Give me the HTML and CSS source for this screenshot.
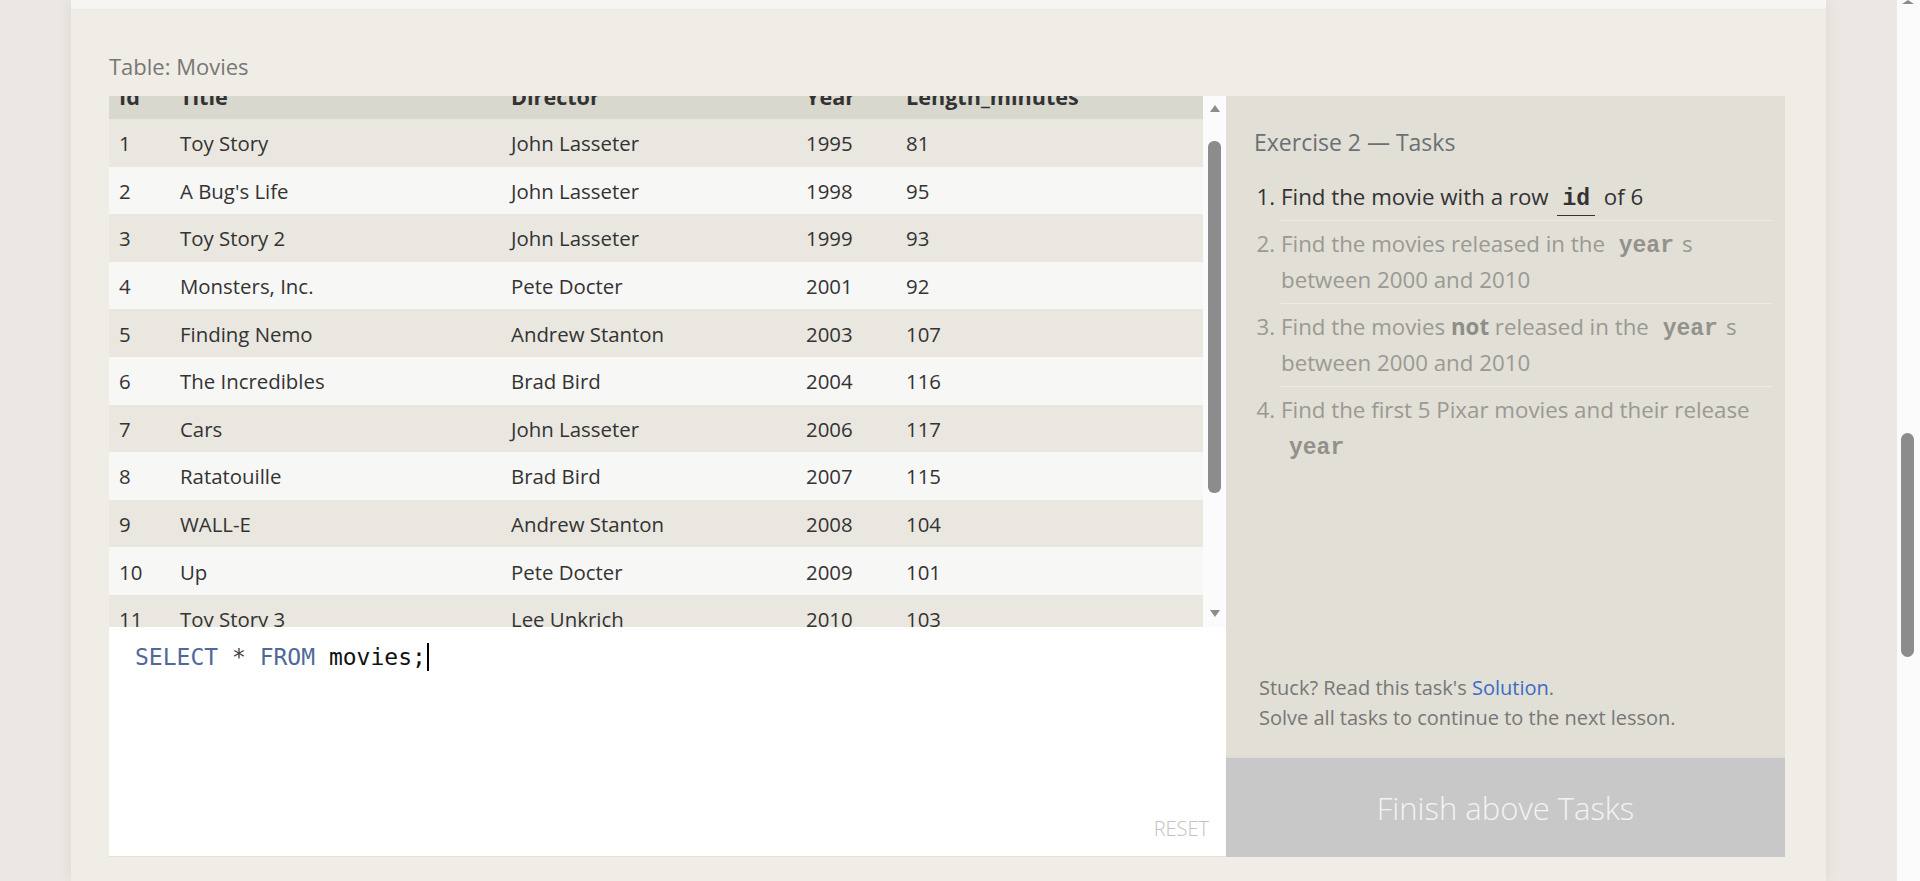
FILE: index.html
```html
<!DOCTYPE html>
<html lang="en">
<head>
<meta charset="utf-8">
<title>SQL Lesson — Table: Movies</title>
<link rel="stylesheet" href="styles.css">
</head>
<body>
<div class="page">
  <div class="main">
    <div class="container">
      <div class="prev-band"></div>
      <div class="exercise">
        <div class="table-title">Table: Movies</div>
        <div class="workspace">
          <div class="left-col">
            <div class="table-view">
              <div class="table-scroll">
                <div class="table-inner">
                  <div class="row head"><span>Id</span><span>Title</span><span>Director</span><span>Year</span><span>Length_minutes</span></div>
                  <div class="row"><span>1</span><span>Toy Story</span><span>John Lasseter</span><span>1995</span><span>81</span></div>
                  <div class="row"><span>2</span><span>A Bug's Life</span><span>John Lasseter</span><span>1998</span><span>95</span></div>
                  <div class="row"><span>3</span><span>Toy Story 2</span><span>John Lasseter</span><span>1999</span><span>93</span></div>
                  <div class="row"><span>4</span><span>Monsters, Inc.</span><span>Pete Docter</span><span>2001</span><span>92</span></div>
                  <div class="row"><span>5</span><span>Finding Nemo</span><span>Andrew Stanton</span><span>2003</span><span>107</span></div>
                  <div class="row"><span>6</span><span>The Incredibles</span><span>Brad Bird</span><span>2004</span><span>116</span></div>
                  <div class="row"><span>7</span><span>Cars</span><span>John Lasseter</span><span>2006</span><span>117</span></div>
                  <div class="row"><span>8</span><span>Ratatouille</span><span>Brad Bird</span><span>2007</span><span>115</span></div>
                  <div class="row"><span>9</span><span>WALL-E</span><span>Andrew Stanton</span><span>2008</span><span>104</span></div>
                  <div class="row"><span>10</span><span>Up</span><span>Pete Docter</span><span>2009</span><span>101</span></div>
                  <div class="row"><span>11</span><span>Toy Story 3</span><span>Lee Unkrich</span><span>2010</span><span>103</span></div>
                  <div class="row"><span>12</span><span>Cars 2</span><span>John Lasseter</span><span>2011</span><span>120</span></div>
                </div>
              </div>
              <div class="vscroll">
                <span class="arrow up"></span>
                <span class="thumb"></span>
                <span class="spacer"></span>
                <span class="arrow down"></span>
              </div>
            </div>
            <div class="editor">
              <div class="code-line"><span class="kw">SELECT</span> <span class="op">*</span> <span class="kw">FROM</span> movies;<span class="cursor"></span></div>
              <div class="reset">RESET</div>
            </div>
          </div>
          <div class="right-col">
            <div class="tasks">
              <div class="tasks-title">Exercise 2 — Tasks</div>
              <ol class="task-list">
                <li class="current">Find the movie with a row <code>id</code> of 6</li>
                <li>Find the movies released in the <code>year</code>s between 2000 and 2010</li>
                <li>Find the movies <b>not</b> released in the <code>year</code>s between 2000 and 2010</li>
                <li>Find the first 5 Pixar movies and their release <code>year</code></li>
              </ol>
              <div class="stuck">Stuck? Read this task's <a href="#" class="solution">Solution</a>.<br>Solve all tasks to continue to the next lesson.</div>
            </div>
            <div class="finish">Finish above Tasks</div>
          </div>
        </div>
      </div>
    </div>
  </div>
  <div class="page-scroll">
    <span class="ps-arrow"></span>
    <span class="ps-thumb"></span>
  </div>
</div>
</body>
</html>
```
FILE: styles.css
```css
* { box-sizing: border-box; }
html, body { margin: 0; padding: 0; height: 881px; overflow: hidden; }
body {
  background: #ebe7e3;
  font-family: "Open Sans", "Noto Sans", sans-serif;
  color: #333;
}
.page { display: flex; height: 881px; }
.main { width: 1897px; height: 881px; }
.container {
  width: 1755px;
  height: 881px;
  margin: 0 auto;
  background: #f0ede6;
  box-shadow: 0 0 14px rgba(0, 0, 0, 0.07);
}
.prev-band {
  height: 10px;
  background: #f7f5f1;
  border-bottom: 1px solid #ebe8e1;
}
.exercise { padding: 41px 41px 0 38px; }
.table-title {
  font-size: 22px;
  line-height: 30px;
  color: #777;
  margin-bottom: 15px;
}
.workspace { display: flex; }
.left-col { width: 1117px; display: flex; flex-direction: column; }
.right-col { width: 559px; display: flex; flex-direction: column; }

.table-view { display: flex; height: 531px; }
.table-scroll { flex: 1; overflow: hidden; }
.table-inner { margin-top: -24.6px; }
.row {
  display: grid;
  grid-template-columns: 61px 331px 295px 100px 1fr;
  height: 47.6px;
  align-items: center;
  font-size: 20.4px;
  line-height: 27px;
  padding-top: 2px;
  color: #333;
  background: #f7f7f5;
}
.row span { padding-left: 10px; white-space: nowrap; }
.row:nth-child(even) { background: #e9e7e0; }
.row.head { background: #d9d8cf; font-weight: 700; font-size: 21.6px; }

.vscroll {
  width: 23px;
  background: #fbfbfb;
  display: flex;
  flex-direction: column;
  align-items: center;
}
.arrow { width: 0; height: 0; border-left: 5px solid transparent; border-right: 5px solid transparent; }
.arrow.up { margin-top: 9px; border-bottom: 7px solid #8c8c8c; }
.arrow.down { margin-bottom: 10px; border-top: 7px solid #8c8c8c; }
.thumb {
  margin-top: 29px;
  width: 12.5px;
  height: 352px;
  border-radius: 6px;
  background: #8c8c8c;
}
.spacer { flex: 1; }

.editor {
  height: 230px;
  background: #fff;
  border-bottom: 1px solid #e3e1dc;
  padding: 15px 17px 15px 26px;
  display: flex;
  flex-direction: column;
}
.code-line {
  font-family: "DejaVu Sans Mono", "Liberation Mono", monospace;
  font-size: 23px;
  line-height: 30px;
  color: #111;
  white-space: pre;
}
.kw { color: #50699a; }
.op { color: #444; }
.cursor {
  display: inline-block;
  width: 2px;
  height: 28px;
  background: #000;
  margin-left: 1px;
  vertical-align: -6px;
}
.reset {
  margin-top: auto;
  align-self: flex-end;
  font-size: 20px;
  line-height: 24px;
  font-weight: 300;
  color: #c2c2c2;
}

.tasks {
  height: 659px;
  background: #e1dfd6;
  display: flex;
  flex-direction: column;
  padding-top: 31px;
}
.tasks-title {
  padding-left: 28px;
  font-size: 23px;
  line-height: 30px;
  color: #6b7075;
}
.task-list {
  margin: 16.5px 12px 0 0;
  padding-left: 55px;
  font-size: 22.3px;
  line-height: 36px;
  color: #9b9993;
}
.task-list li {
  padding: 5px 0 5px;
  border-bottom: 1px solid rgba(255, 255, 255, 0.35);
}
.task-list li:last-child { border-bottom: none; }
.task-list li.current { color: #333; }
.task-list b { font-weight: 700; color: #8f8d87; }
.task-list code {
  font-family: "Liberation Mono", "DejaVu Sans Mono", monospace;
  font-weight: 700;
  font-size: 23px;
  line-height: 1;
  padding: 0 5px 3px;
  margin: 0 3px;
  color: #93918b;
}
.task-list li.current code {
  color: #333;
  border-bottom: 1px solid #333;
}
.stuck {
  margin-top: auto;
  padding: 0 0 22px 33px;
  font-size: 20px;
  line-height: 30px;
  color: #777;
}
.solution { color: #3a6cc4; text-decoration: none; }
.finish {
  height: 102px;
  background: #c8c8c8;
  border-top: 3px solid #dedcd5;
  display: flex;
  align-items: center;
  justify-content: center;
  font-size: 31px;
  font-weight: 300;
  color: #f3f3f3;
}

.page-scroll {
  width: 23px;
  height: 881px;
  background: #fbfbfb;
  display: flex;
  flex-direction: column;
  align-items: center;
}
.ps-arrow {
  width: 0; height: 0;
  border-left: 6px solid transparent;
  border-right: 6px solid transparent;
  border-bottom: 4px solid #8c8c8c;
  margin-left: -1px;
}
.ps-thumb {
  margin-top: 429px;
  width: 13px;
  height: 224px;
  border-radius: 6.5px;
  background: #8c8c8c;
  margin-left: -3px;
}
```
